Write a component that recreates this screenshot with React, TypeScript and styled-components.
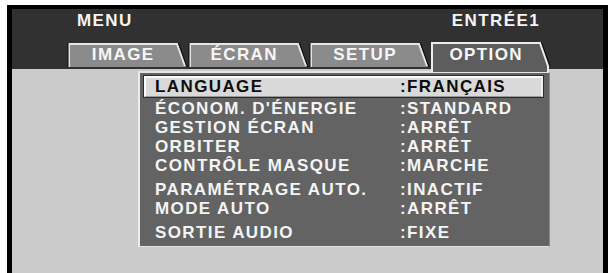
import React from 'react';
import styled, { createGlobalStyle } from 'styled-components';

// Types
interface MenuItem {
  label: string;
  value: string;
  gap?: number;
}

// Data
const tabs = ['IMAGE', 'ÉCRAN', 'SETUP', 'OPTION'];
const activeTab = 'OPTION';

const items: MenuItem[] = [
  { label: 'LANGUAGE', value: 'FRANÇAIS' },
  { label: "ÉCONOM. D'ÉNERGIE", value: 'STANDARD', gap: 2 },
  { label: 'GESTION ÉCRAN', value: 'ARRÊT' },
  { label: 'ORBITER', value: 'ARRÊT' },
  { label: 'CONTRÔLE MASQUE', value: 'MARCHE' },
  { label: 'PARAMÉTRAGE AUTO.', value: 'INACTIF', gap: 5 },
  { label: 'MODE AUTO', value: 'ARRÊT' },
  { label: 'SORTIE AUDIO', value: 'FIXE', gap: 5 },
];

const TAB_W = 118;
const SLANT = 9;

// Styled Components
const GlobalStyle = createGlobalStyle`
  html, body {
    margin: 0;
    padding: 0;
    background: #ffffff;
    overflow: hidden;
  }
  body {
    font-family: "Liberation Sans", Arial, sans-serif;
  }
`;

const Screen = styled.div`
  margin: 5px 0 0 7px;
  width: 591px;
  height: 268px;
  border: 5px solid #000;
  border-top-width: 4px;
  border-bottom: none;
  background: #cbcbcb;
  display: flex;
  flex-direction: column;
`;

const Header = styled.header`
  background: #313131;
  height: 60px;
  display: flex;
  flex-direction: column;
  flex: none;
`;

const TitleBar = styled.div`
  display: flex;
  justify-content: space-between;
  box-sizing: border-box;
  height: 34px;
  padding: 2px 63px 0 65px;
`;

const Title = styled.span`
  font-weight: 700;
  font-size: 17px;
  line-height: 20px;
  letter-spacing: 1.4px;
  color: #f4f4f4;
`;

const TabRow = styled.nav`
  display: flex;
  align-items: flex-start;
  gap: 3px;
  height: 24px;
  padding-left: 56px;
`;

const Tab = styled.div<{ $active?: boolean }>`
  position: relative;
  z-index: ${p => (p.$active ? 2 : 1)};
  width: ${TAB_W}px;
  height: ${p => (p.$active ? 30 : 24)}px;
  margin-top: ${p => (p.$active ? -1 : 0)}px;
  box-sizing: border-box;
  padding-top: ${p => (p.$active ? 3 : 2)}px;
  flex: none;
`;

const TabShape = styled.svg`
  position: absolute;
  top: 0;
  left: 0;
  overflow: visible;
`;

const TabLabel = styled.div`
  position: relative;
  width: ${TAB_W - SLANT}px;
  padding-left: 1.4px;
  box-sizing: border-box;
  text-align: center;
  font-weight: 700;
  font-size: 17px;
  line-height: 20px;
  letter-spacing: 1.4px;
  color: #f6f6f6;
`;

const Body = styled.main`
  flex: 1;
  padding: 2px 0 0 126px;
`;

const Panel = styled.section`
  width: 412px;
  box-sizing: border-box;
  background: #636363;
  border-left: 2px solid #ececec;
  border-top: 2px solid #e4e4e4;
  border-right: 1px solid #8a8a8a;
  border-bottom: 1px solid #e2e2e2;
  padding: 3px 6px 4px 4px;
`;

const Row = styled.div<{ $selected?: boolean; $gap?: number }>`
  display: flex;
  box-sizing: border-box;
  margin-top: ${p => p.$gap ?? 0}px;
  height: ${p => (p.$selected ? 21 : 19)}px;
  line-height: ${p => (p.$selected ? 18 : 19)}px;
  padding-left: ${p => (p.$selected ? 9 : 11)}px;
  border-style: solid;
  border-width: ${p => (p.$selected ? '2px 2px 1px 2px' : '0')};
  border-color: #fafafa #f0f0f0 #9a9a9a #fafafa;
  background: ${p => (p.$selected ? '#d9d9d9' : 'transparent')};
  box-shadow: ${p => (p.$selected ? '0 0 0 1px #2b2b2b' : 'none')};
  color: ${p => (p.$selected ? '#0d0d0d' : '#f4f4f4')};
  font-weight: 700;
  font-size: 17px;
  letter-spacing: 1.4px;
  white-space: nowrap;
`;

const Label = styled.span`
  width: 245px;
  flex: none;
`;

const Value = styled.span`
  flex: none;
`;

// Tab outline drawing
const TabOutline: React.FC<{ active: boolean }> = ({ active }) => {
  const h = active ? 30 : 24;
  const top = TAB_W - SLANT;
  if (active) {
    return (
      <TabShape width={TAB_W} height={h}>
        <polygon points={`0,${h} 0,0 ${top},0 ${TAB_W},24 ${TAB_W},${h}`} fill="#5d5d5d" />
        <polyline
          points={`1,${h} 1,1 ${top},1 ${TAB_W - 1},24 ${TAB_W - 1},${h}`}
          fill="none"
          stroke="#ececec"
          strokeWidth={2}
        />
        <line x1={top + 1.5} y1={0} x2={TAB_W + 1} y2={24} stroke="#0c0c0c" strokeWidth={1} />
      </TabShape>
    );
  }
  return (
    <TabShape width={TAB_W} height={h}>
      <polygon points={`0,${h} 0,0 ${top},0 ${TAB_W},${h}`} fill="#8b8b8b" />
      <polyline
        points={`1,${h} 1,1 ${top},1 ${TAB_W - 1},${h - 1}`}
        fill="none"
        stroke="#e6e6e6"
        strokeWidth={2}
      />
      <line x1={top + 1.5} y1={0} x2={TAB_W + 1} y2={h} stroke="#0c0c0c" strokeWidth={1} />
      <line x1={0} y1={0} x2={0} y2={h} stroke="#0c0c0c" strokeWidth={1} />
    </TabShape>
  );
};

// Component
const App: React.FC = () => {
  return (
    <>
      <GlobalStyle />
      <Screen>
        <Header>
          <TitleBar>
            <Title>MENU</Title>
            <Title>ENTRÉE1</Title>
          </TitleBar>
          <TabRow>
            {tabs.map(name => {
              const active = name === activeTab;
              return (
                <Tab key={name} $active={active}>
                  <TabOutline active={active} />
                  <TabLabel>{name}</TabLabel>
                </Tab>
              );
            })}
          </TabRow>
        </Header>
        <Body>
          <Panel>
            {items.map((item, index) => (
              <Row key={item.label} $selected={index === 0} $gap={item.gap}>
                <Label>{item.label}</Label>
                <Value>:{item.value}</Value>
              </Row>
            ))}
          </Panel>
        </Body>
      </Screen>
    </>
  );
};

export default App;
